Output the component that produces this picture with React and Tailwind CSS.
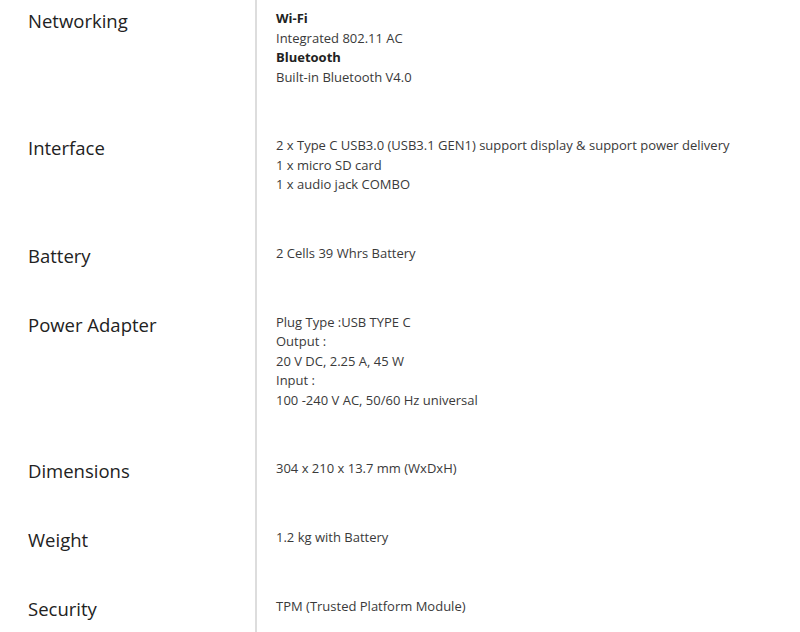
import React from "react";

const rows = [
  { label: "Networking", lines: [{ t: "Wi-Fi", b: true }, { t: "Integrated 802.11 AC" }, { t: "Bluetooth", b: true }, { t: "Built-in Bluetooth V4.0" }] },
  { label: "Interface", lines: [{ t: "2 x Type C USB3.0 (USB3.1 GEN1) support display & support power delivery" }, { t: "1 x micro SD card" }, { t: "1 x audio jack COMBO" }] },
  { label: "Battery", lines: [{ t: "2 Cells 39 Whrs Battery" }] },
  { label: "Power Adapter", lines: [{ t: "Plug Type :USB TYPE C" }, { t: "Output :" }, { t: "20 V DC, 2.25 A, 45 W" }, { t: "Input :" }, { t: "100 -240 V AC, 50/60 Hz universal" }] },
  { label: "Dimensions", lines: [{ t: "304 x 210 x 13.7 mm (WxDxH)" }] },
  { label: "Weight", lines: [{ t: "1.2 kg with Battery" }] },
  { label: "Security", lines: [{ t: "TPM (Trusted Platform Module)" }] },
];

export default function App() {
  return (
    <div className="w-[800px] h-[632px] overflow-hidden bg-white" style={{ fontFamily: '"Open Sans", "Noto Sans", sans-serif' }}>
      {rows.map((r, i) => (
        <div key={i} className="flex">
          <div className={`w-[255px] shrink-0 pl-[28px] text-[18.5px] leading-[23px] text-[#222] ${i === 0 ? "pt-[9px]" : ""}`}>
            {r.label}
          </div>
          <div className={`flex-1 border-l-2 border-[#dddddd] pl-[19px] pb-[49.2px] text-[13px] leading-[19.5px] text-[#3a3a3a] ${i === 0 ? "pt-[9px]" : ""}`}>
            {r.lines.map((l, j) => (
              <div key={j} className={l.b ? "font-bold text-[#222]" : ""}>{l.t}</div>
            ))}
          </div>
        </div>
      ))}
    </div>
  );
}
